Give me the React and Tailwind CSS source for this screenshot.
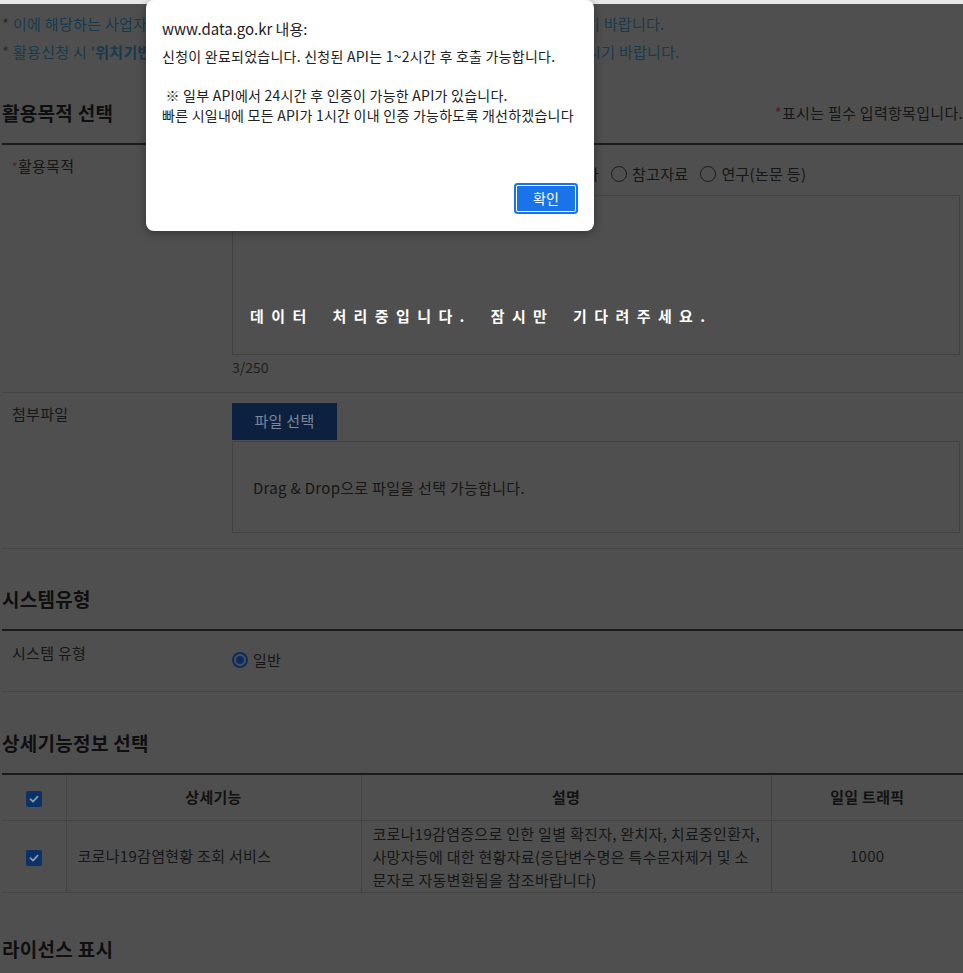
import React from 'react'

const FONT = { fontFamily: '"Noto Sans CJK KR", "Noto Sans", sans-serif' }

const purposes = ['웹 사이트 개발', '앱개발 (모바일,솔루션등)', '기타', '참고자료', '연구(논문 등)']

function Radio({ label, checked }) {
    return (
        <label className="flex items-center gap-[5px] whitespace-nowrap">
            {checked ? (
                <span className="w-4 h-4 rounded-full border-2 border-[#0b2c5e] flex items-center justify-center">
                    <span className="w-2 h-2 rounded-full bg-[#0b2c5e]" />
                </span>
            ) : (
                <span className="w-4 h-4 rounded-full border border-[#1c1c1c]" />
            )}
            <span>{label}</span>
        </label>
    )
}

function Check() {
    return (
        <span className="inline-flex w-4 h-4 rounded-[2px] bg-[#0b3168] items-center justify-center align-middle">
            <svg width="12" height="12" viewBox="0 0 12 12" fill="none">
                <path d="M2.5 6.2 L5 8.6 L9.6 3.6" stroke="#8b99ae" strokeWidth="1.8" strokeLinecap="round" strokeLinejoin="round" />
            </svg>
        </span>
    )
}

function SectionTitle({ children, right, pt }) {
    return (
        <div className={`flex items-center justify-between ${pt} pb-[17px]`}>
            <h2 className="text-[19px] leading-[26px] font-bold text-[#0f0f0f]">{children}</h2>
            {right}
        </div>
    )
}

export default function App() {
    return (
        <div className="relative h-[973px] overflow-hidden bg-[#4f4f4f] text-[15px] tracking-[0.3px] text-[#161616]" style={FONT}>
            <div className="h-[4px] bg-[#e8e8e8]" />

            {/* dimmed page behind the alert */}
            <div className="pl-[2px]">
                <div className="pt-[6px] text-[#173a4e] leading-[28px] whitespace-nowrap">
                    <p><span className="text-[#2c2c2c]">*</span> 이에 해당하는 사업자는 위치정보 보호 및 이용 등에 관한 법률에 따라 신고 후 활용신청 하시기 바랍니다.</p>
                    <p><span className="text-[#2c2c2c]">*</span> 활용신청 시 '<b>위치기반서비스사업자 신고필증</b>' 사본을 첨부파일로 등록하시어 반드시 제출하시기 바랍니다.</p>
                </div>

                <SectionTitle
                    pt="pt-[34px]"
                    right={<span className="text-[15px] text-[#161616]"><span className="text-[#5e1a20]">*</span>표시는 필수 입력항목입니다.</span>}
                >
                    활용목적 선택
                </SectionTitle>

                <div className="border-t-2 border-[#1a1a1a]">
                    <div className="flex border-b border-[#444444]">
                        <div className="w-[230px] pl-[10px] pt-[11px] leading-[20px]">
                            <span className="text-[#5e1a20] text-[12px]">*</span>활용목적
                        </div>
                        <div className="flex-1 pt-[19px] pb-[15px]">
                            <div className="flex gap-[12px] leading-[20px]">
                                {purposes.map((p) => (
                                    <Radio key={p} label={p} />
                                ))}
                            </div>
                            <div className="mt-[11px] w-[728px] h-[160px] border border-[#424242]" />
                            <div className="mt-[2px] leading-[20px] text-[14px] tracking-normal text-[#1e1e1e]">3/250</div>
                        </div>
                    </div>

                    <div className="flex border-b border-[#444444]">
                        <div className="w-[230px] pl-[10px] pt-[11px] leading-[20px]">첨부파일</div>
                        <div className="flex-1 pt-[10px] pb-[15px]">
                            <button className="w-[105px] h-[37px] bg-[#0c2140] text-[#7d8799] text-[15px]">파일 선택</button>
                            <div className="mt-[1px] w-[728px] h-[92px] border border-[#424242] flex items-center pl-[20px] pt-[2px]">
                                Drag &amp; Drop으로 파일을 선택 가능합니다.
                            </div>
                        </div>
                    </div>
                </div>

                <SectionTitle pt="pt-[37px]">시스템유형</SectionTitle>

                <div className="border-t-2 border-[#1a1a1a]">
                    <div className="flex h-[61px] border-b border-[#444444]">
                        <div className="w-[230px] pl-[10px] pt-[12px] leading-[20px]">시스템 유형</div>
                        <div className="flex-1 pt-[19px] leading-[20px]">
                            <Radio label="일반" checked />
                        </div>
                    </div>
                </div>

                <SectionTitle pt="pt-[38px]">상세기능정보 선택</SectionTitle>

                <table className="w-full border-collapse border-t-2 border-[#1a1a1a]">
                    <thead>
                        <tr className="h-[46px] border-b border-[#444444] text-[#121212]">
                            <th className="w-[64px] border-r border-[#444444]"><Check /></th>
                            <th className="w-[295px] border-r border-[#444444] font-bold">상세기능</th>
                            <th className="w-[410px] border-r border-[#444444] font-bold">설명</th>
                            <th className="font-bold">일일 트래픽</th>
                        </tr>
                    </thead>
                    <tbody>
                        <tr className="h-[72px] border-b border-[#444444]">
                            <td className="text-center border-r border-[#444444]"><Check /></td>
                            <td className="pl-[11px] border-r border-[#444444]">코로나19감염현황 조회 서비스</td>
                            <td className="pl-[11px] leading-[23px] border-r border-[#444444] whitespace-nowrap">
                                코로나19감염증으로 인한 일별 확진자, 완치자, 치료중인환자,<br />
                                사망자등에 대한 현황자료(응답변수명은 특수문자제거 및 소<br />
                                문자로 자동변환됨을 참조바랍니다)
                            </td>
                            <td className="text-center">1000</td>
                        </tr>
                    </tbody>
                </table>

                <SectionTitle pt="pt-[43px]">라이선스 표시</SectionTitle>
            </div>

            {/* loading message over the dim layer */}
            <p className="absolute left-[250px] top-[305px] text-white font-bold text-[15px] leading-[22px] tracking-[7.4px] [word-spacing:8px] whitespace-nowrap">
                데이터 처리중입니다. 잠시만 기다려주세요.
            </p>

            {/* browser alert */}
            <div className="absolute left-[146px] top-0 w-[448px] h-[231px] bg-white rounded-[8px] shadow-[0_2px_10px_rgba(0,0,0,0.35)] text-[#202124] px-4 tracking-normal">
                <div className="pt-[19px] text-[15px] leading-[20px]">www.data.go.kr 내용:</div>
                <div className="mt-[8px] text-[14px] tracking-[0.25px] leading-[19.5px] whitespace-pre">
                    {'신청이 완료되었습니다. 신청된 API는 1~2시간 후 호출 가능합니다.\n\n ※ 일부 API에서 24시간 후 인증이 가능한 API가 있습니다.\n빠른 시일내에 모든 API가 1시간 이내 인증 가능하도록 개선하겠습니다'}
                </div>
                <div className="absolute right-[16px] top-[183px]">
                    <button className="w-[64px] h-[31px] rounded-[4px] bg-[#1a73e8] text-white text-[14px] shadow-[inset_0_0_0_2px_#1a73e8,inset_0_0_0_3px_#ffffff]">
                        확인
                    </button>
                </div>
            </div>
        </div>
    )
}
